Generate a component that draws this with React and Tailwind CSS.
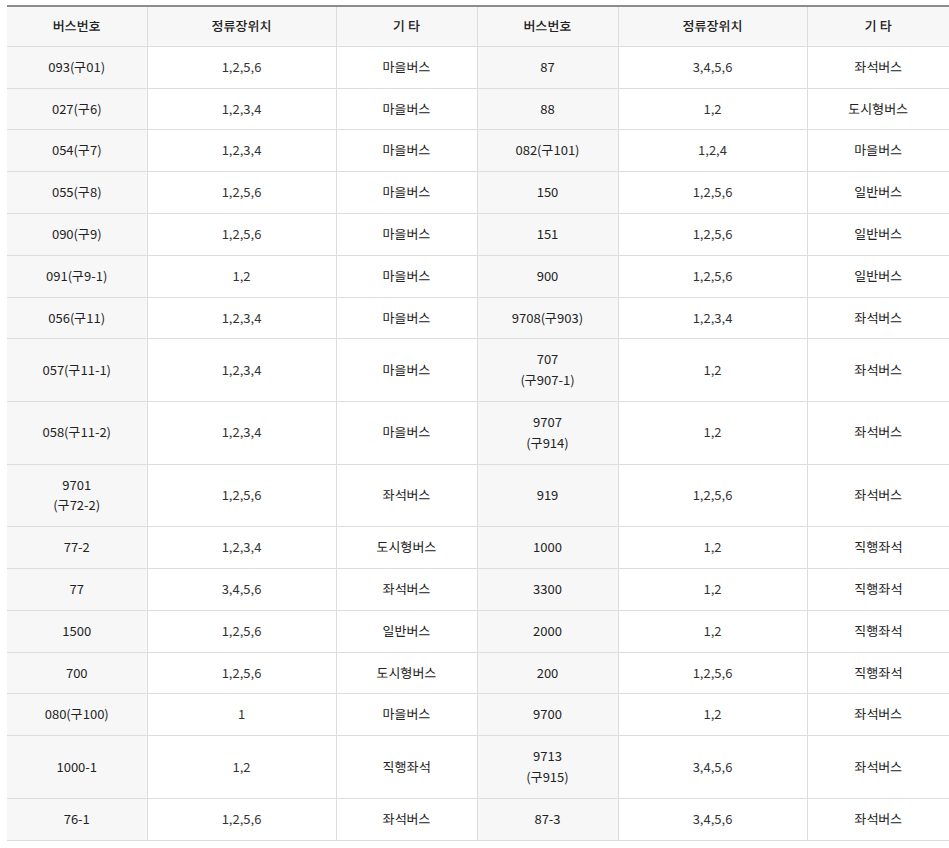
import React from 'react';

const rows = [
  [['093(구01)'], '1,2,5,6', '마을버스', ['87'], '3,4,5,6', '좌석버스'],
  [['027(구6)'], '1,2,3,4', '마을버스', ['88'], '1,2', '도시형버스'],
  [['054(구7)'], '1,2,3,4', '마을버스', ['082(구101)'], '1,2,4', '마을버스'],
  [['055(구8)'], '1,2,5,6', '마을버스', ['150'], '1,2,5,6', '일반버스'],
  [['090(구9)'], '1,2,5,6', '마을버스', ['151'], '1,2,5,6', '일반버스'],
  [['091(구9-1)'], '1,2', '마을버스', ['900'], '1,2,5,6', '일반버스'],
  [['056(구11)'], '1,2,3,4', '마을버스', ['9708(구903)'], '1,2,3,4', '좌석버스'],
  [['057(구11-1)'], '1,2,3,4', '마을버스', ['707', '(구907-1)'], '1,2', '좌석버스'],
  [['058(구11-2)'], '1,2,3,4', '마을버스', ['9707', '(구914)'], '1,2', '좌석버스'],
  [['9701', '(구72-2)'], '1,2,5,6', '좌석버스', ['919'], '1,2,5,6', '좌석버스'],
  [['77-2'], '1,2,3,4', '도시형버스', ['1000'], '1,2', '직행좌석'],
  [['77'], '3,4,5,6', '좌석버스', ['3300'], '1,2', '직행좌석'],
  [['1500'], '1,2,5,6', '일반버스', ['2000'], '1,2', '직행좌석'],
  [['700'], '1,2,5,6', '도시형버스', ['200'], '1,2,5,6', '직행좌석'],
  [['080(구100)'], '1', '마을버스', ['9700'], '1,2', '좌석버스'],
  [['1000-1'], '1,2', '직행좌석', ['9713', '(구915)'], '3,4,5,6', '좌석버스'],
  [['76-1'], '1,2,5,6', '좌석버스', ['87-3'], '3,4,5,6', '좌석버스'],
];

const headers = ['버스번호', '정류장위치', '기 타', '버스번호', '정류장위치', '기 타'];

const cellBase = 'border-b border-[#dddddd] py-[10px] text-center align-middle leading-[20.8px]';

const BusCell = ({ lines }) => (
  <td className={`${cellBase} border-r bg-[#f7f7f7] text-[#222]`}>
    {lines.map((l, i) => (
      <div key={i}>{l}</div>
    ))}
  </td>
);

export default function App() {
  return (
    <div
      className="min-h-[848px] bg-white pt-[5px] pl-[7px] text-[13px] text-[#333]"
      style={{ fontFamily: '"Noto Sans KR", "Noto Sans CJK KR", "Liberation Sans", sans-serif' }}
    >
      <table className="w-[942px] table-fixed border-collapse border-t-2 border-[#8c8c8c]">
        <colgroup>
          <col className="w-[140px]" />
          <col className="w-[189px]" />
          <col className="w-[141px]" />
          <col className="w-[141px]" />
          <col className="w-[189px]" />
          <col className="w-[142px]" />
        </colgroup>
        <thead>
          <tr>
            {headers.map((h, i) => (
              <th
                key={i}
                className={`border-b border-[#dddddd] bg-[#f7f7f7] py-[9px] text-center font-medium leading-[20.8px] text-[#222] ${
                  i < 5 ? 'border-r' : ''
                }`}
              >
                {h}
              </th>
            ))}
          </tr>
        </thead>
        <tbody>
          {rows.map((r, i) => (
            <tr key={i}>
              <BusCell lines={r[0]} />
              <td className={`${cellBase} border-r`}>{r[1]}</td>
              <td className={`${cellBase} border-r text-[#222]`}>{r[2]}</td>
              <BusCell lines={r[3]} />
              <td className={`${cellBase} border-r`}>{r[4]}</td>
              <td className={`${cellBase} text-[#222]`}>{r[5]}</td>
            </tr>
          ))}
        </tbody>
      </table>
    </div>
  );
}
